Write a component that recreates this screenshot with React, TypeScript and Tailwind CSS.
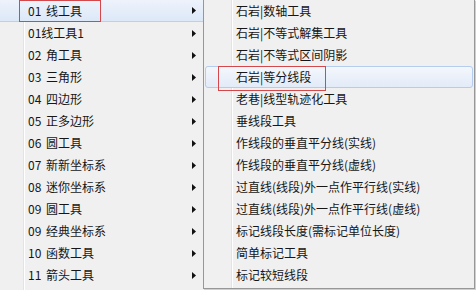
import React from "react";

const leftItems = [
  "01 线工具",
  "01线工具1",
  "02 角工具",
  "03 三角形",
  "04 四边形",
  "05 正多边形",
  "06 圆工具",
  "07 新新坐标系",
  "08 迷你坐标系",
  "09 圆工具",
  "09 经典坐标系",
  "10 函数工具",
  "11 箭头工具",
];

const rightItems = [
  "石岩|数轴工具",
  "石岩|不等式解集工具",
  "石岩|不等式区间阴影",
  "石岩|等分线段",
  "老巷|线型轨迹化工具",
  "垂线段工具",
  "作线段的垂直平分线(实线)",
  "作线段的垂直平分线(虚线)",
  "过直线(线段)外一点作平行线(实线)",
  "过直线(线段)外一点作平行线(虚线)",
  "标记线段长度(需标记单位长度)",
  "简单标记工具",
  "标记较短线段",
];

function Arrow() {
  return (
    <svg width="4" height="7" viewBox="0 0 4 7" className="block">
      <path d="M0 0 L4 3.5 L0 7 Z" fill="#111" />
    </svg>
  );
}

export default function App() {
  return (
    <div
      className="relative w-[476px] h-[290px] overflow-hidden bg-[#f0f0f0] text-[12px] text-[#161616] flex"
      style={{ fontFamily: '"Noto Sans CJK SC", "Microsoft YaHei", sans-serif' }}
    >
      {/* Left menu */}
      <div className="relative w-[203px] shrink-0 h-full bg-[linear-gradient(to_right,#f0f0f0_23px,#e2e3e3_23px,#e2e3e3_24px,#ffffff_24px,#ffffff_25px,#f0f0f0_25px)]">
        <div className="flex flex-col">
          {leftItems.map((t, i) => (
            <div
              key={i}
              className={
                "h-[22px] flex items-center pl-[28px] pr-[7px] " +
                (i === 0
                  ? "bg-gradient-to-b from-[#eef3fb] to-[#dce8f8] border-b border-[#b9d1ef]"
                  : "")
              }
            >
              <span className="flex-1 leading-[22px] whitespace-nowrap [word-spacing:2px]">{t}</span>
              <Arrow />
            </div>
          ))}
        </div>
        {/* red mark */}
        <div className="absolute left-[19px] top-0 w-[82px] h-[22px] border border-[#d4474a]" />
      </div>

      {/* Right submenu */}
      <div className="relative w-[272px] h-[289px] shrink-0 border-l border-r border-b border-[#979797] px-[1px] shadow-[1px_1px_0_#cfcfcf] bg-[linear-gradient(to_right,#f0f0f0_27px,#e2e3e3_27px,#e2e3e3_28px,#ffffff_28px,#ffffff_29px,#f0f0f0_29px)]">
        <div className="flex flex-col">
          {rightItems.map((t, i) => (
            <div
              key={i}
              className={
                "h-[22px] flex items-center whitespace-nowrap " +
                (i === 3
                  ? "rounded-[3px] border border-[#b4cdee] bg-gradient-to-b from-[#f4f7fc] to-[#e2ebf8] pl-[30px]"
                  : "pl-[31px]")
              }
            >
              {t}
            </div>
          ))}
        </div>
        <div className="absolute left-[14px] top-[66px] w-[108px] h-[25px] border border-[#d4474a]" />
      </div>
    </div>
  );
}
